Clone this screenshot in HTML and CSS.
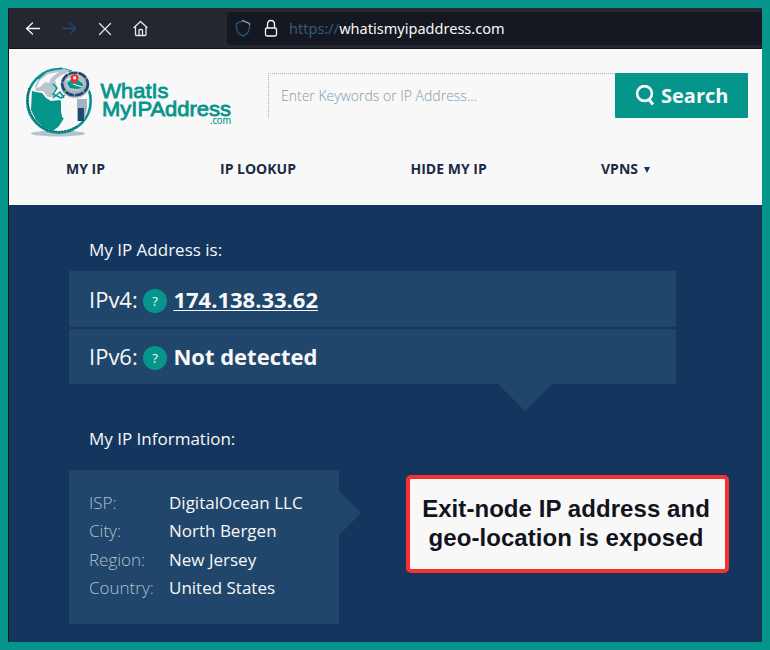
FILE: index.html
```html
<!DOCTYPE html>
<html lang="en">
<head>
<meta charset="utf-8">
<title>What Is My IP Address</title>
<link rel="stylesheet" href="styles.css">
</head>
<body>
<div class="window">
  <div class="toolbar">
    <svg class="nav-icons" width="140" height="40" viewBox="0 0 140 40" fill="none" stroke-linecap="round" stroke-linejoin="round">
      <path d="M17.500 20.500H30.500M23.500 15L17.500 20.500L23.500 26" stroke="#f8f8f8" stroke-width="1.300"/>
      <path d="M53.500 20.500H66.500M61 15L67 20.500L61 26" stroke="#204870" stroke-width="1.300"/>
      <path d="M90.500 15.500L101.500 26.500M101.500 15.500L90.500 26.500" stroke="#e4eaf0" stroke-width="1.200"/>
      <path d="M125 19.500L131.500 13.500L138 19.500M126.500 19V26.500Q126.500 27.500 127.500 27.500H136Q137 27.500 137 26.500V19M130 27.500V22.500Q130 21.500 131 21.500H132.500Q133.500 21.500 133.500 22.500V27.500" stroke="#e4eaf0" stroke-width="1.300"/>
    </svg>
    <div class="address">
      <svg width="52" height="32" viewBox="0 0 52 32" fill="none" stroke-width="1.500" stroke-linejoin="round">
        <path d="M16 8.700L22.500 11.500V15Q22.500 21 16 24Q9.500 21 9.500 15V11.500Z" stroke="#245078"/>
        <path d="M15 9L16 8.700L22.500 11.500V13" stroke="#a0b4c4" stroke-width="1"/>
        <rect x="38.500" y="16" width="11" height="8" rx="1.500" stroke="#f8f8f8" stroke-width="1.300"/>
        <path d="M40.500 16V12.500Q40.500 8.500 44 8.500T47.500 12.500V16" stroke="#f8f8f8" stroke-width="1.300"/>
      </svg>
      <span class="url"><span class="scheme">https://</span>whatismyipaddress.com</span>
    </div>
  </div>

  <header class="header">
    <div class="brand-row">
      <svg class="logo" width="214" height="78" viewBox="22 62 214 78">
        <ellipse cx="58" cy="133.500" rx="27" ry="3" fill="#a0b4c4" opacity=".8"/>
        <circle cx="59" cy="101" r="31.700" fill="#f8f8f8" stroke="#06958b" stroke-width="2.600"/>
        <path d="M29 88Q24 112 41 126Q58 137 77 126" fill="none" stroke="#204870" stroke-width="1.200" stroke-dasharray="2 1"/>
        <path d="M32 91L36 92L42 93L46 98L51 101L60 100L62 105L57 109L62 113L64 118L59 126L53 131L43 127L36 120L31 110Z" fill="#06958b"/>
        <path d="M44 101H61V116L63 119L58 127L52 130L44 127Z" fill="#06958b"/>
        <path d="M38 80L44 73L54 70L65 69L70 71L60 76L55 80L57 87L52 92L55 97L48 97L43 91L36 91L35 86Z" fill="#b8c6d1"/>
        <path d="M40 80L48 74L59 72L51 78L49 83L45 82L40 87L36 88Z" fill="#f8f8f8"/>
        <path d="M38 79L47 71L62 68M53 84L57 88L53 94L61 98L66 94L72 97M53 98L60 92L64 98" fill="none" stroke="#06958b" stroke-width="1.500"/>
        <path d="M61 101L75 101L76 118Q69 127 63 128L66 120L62 117L61 110Z" fill="#f8f8f8"/>
        <path d="M77 99H87V108L84 121H77Z" fill="#a0b4c4"/>
        <path d="M78 108H84V121H78Z" fill="#204870"/>
        <ellipse cx="75" cy="85" rx="15" ry="13.500" fill="#a0b4c4" stroke="#f8f8f8"/>
        <ellipse cx="75" cy="84" rx="12.800" ry="11.300" fill="none" stroke="#204870" stroke-width="2.600" stroke-dasharray="9 1"/>
        <ellipse cx="75" cy="82.500" rx="10" ry="8.800" fill="#b4c4cf"/>
        <path d="M67 83L72 79L78 80L83 84L82 88L77 89L70 88Z" fill="#06958b"/>
        <path d="M73 84L82 87M67 80L71 78" stroke="#f8f8f8" stroke-width="1.300"/>
        <path d="M74.500 84.500L70.500 79Q70 74.500 74.500 74Q79 74.500 78.500 79Z" fill="#f83030"/>
        <rect x="73.200" y="76.500" width="2.800" height="2.800" fill="#f8f8f8"/>
        <g fill="#06958b" font-family="Liberation Sans, Arial, sans-serif" stroke="#06958b">
          <text x="100.500" y="98" font-size="21" stroke-width=".8" textLength="68" lengthAdjust="spacingAndGlyphs">WhatIs</text>
          <text x="102" y="116" font-size="21" stroke-width=".8" textLength="129" lengthAdjust="spacingAndGlyphs">MyIPAddress</text>
          <text x="210" y="124" font-size="10" stroke-width=".2" font-family="Open Sans, sans-serif" textLength="21" lengthAdjust="spacingAndGlyphs">.com</text>
        </g>
      </svg>
      <div class="search">
        <div class="field">Enter Keywords or IP Address...</div>
        <div class="button">
          <svg width="20" height="22" viewBox="0 0 20 22" fill="none" stroke="#f8f8f8"><circle cx="9.500" cy="8.500" r="7.400" stroke-width="2.600"/><path d="M13.500 14L18 19.500" stroke-width="3"/></svg>
          <span class="button-label">Search</span>
        </div>
      </div>
    </div>
    <nav class="menu">
      <span class="item">MY IP</span>
      <span class="item">IP LOOKUP</span>
      <span class="item">HIDE MY IP</span>
      <span class="item">VPNS <svg class="caret" width="6" height="6" viewBox="0 0 6 6"><path d="M0 0H6L3 6Z" fill="#14365e"/></svg></span>
    </nav>
  </header>

  <main class="main">
    <h2 class="title">My IP Address is:</h2>
    <div class="addresses">
      <div class="row"><span class="kind">IPv4:</span><span class="help">?</span><span class="value linked">174.138.33.62</span></div>
      <div class="row"><span class="kind">IPv6:</span><span class="help">?</span><span class="value undetected">Not detected</span></div>
    </div>
    <h2 class="title info-title">My IP Information:</h2>
    <div class="lower">
      <dl class="info">
        <dt>ISP:</dt><dd class="isp">DigitalOcean LLC</dd>
        <dt>City:</dt><dd>North Bergen</dd>
        <dt>Region:</dt><dd>New Jersey</dd>
        <dt>Country:</dt><dd>United States</dd>
      </dl>
      <div class="note"><span class="line-one">Exit-node IP address and</span><br><span class="line-two">geo-location is exposed</span></div>
    </div>
  </main>
</div>
</body>
</html>
```
FILE: styles.css
```css
* { box-sizing: border-box; }
body {
  margin: 0;
  width: 770px;
  height: 650px;
  padding: 8px;
  background: #06958b;
  font-family: "Open Sans", sans-serif;
  overflow: hidden;
}
.window { width: 754px; height: 634px; border-left: 1px solid #12141d; }
.toolbar {
  height: 41px;
  display: flex;
  align-items: center;
  background: #24272f;
  border-bottom: 1px solid #12141d;
}
.address {
  flex: 1;
  height: 33px;
  margin-left: 78px;
  display: flex;
  align-items: center;
  background: #151820;
  border-radius: 4px 0 0 4px;
}
.url { margin-left: 10px; font: 14.550px/32px "Noto Sans", sans-serif; color: #f8f8f8; white-space: nowrap; }
.scheme { color: #34597b; }
.header { height: 156px; background: #f8f8f8; }
.brand-row { display: flex; height: 92px; }
.logo { margin: 13px 0 0 13px; flex: none; }
.search { display: flex; margin: 24px 0 0 32px; height: 45px; width: 480px; }
.field {
  width: 347px;
  padding-left: 12px;
  border-top: 1px dotted #a0b4c4;
  border-left: 1px dotted #a0b4c4;
  color: #7f99ad;
  font-size: 14px;
  font-weight: 300;
  line-height: 43px;
}
.button {
  width: 133px;
  display: flex;
  align-items: center;
  padding-left: 20px;
  gap: 6px;
  border-radius: 1px;
  background: #06958b;
  color: #f8f8f8;
  font-size: 20px;
  font-weight: 700;
  line-height: 45px;
}
.menu {
  display: grid;
  grid-template-columns: 154px 190.500px 190.500px 1fr;
  padding-left: 57px;
  color: #1b2b42;
  font-size: 14px;
  font-weight: 700;
  line-height: 56px;
}
.caret { margin: 0 0 1px 2px; }
.main { height: 437px; padding: 32px 0 0 60px; background: #14365e; color: #f8f8f8; }
.title { margin: 0 0 0 20px; height: 34px; font-size: 17px; font-weight: 400; line-height: 26px; }
.addresses { position: relative; width: 607px; display: grid; gap: 2px; }
.addresses::after {
  content: "";
  position: absolute;
  left: 429px;
  top: 100%;
  border: 27px solid transparent;
  border-top-color: #20466b;
  border-bottom: 0;
}
.row {
  height: 56px;
  display: flex;
  align-items: center;
  padding-left: 20px;
  background: #20466b;
  font-size: 22px;
}
.row + .row { height: 55px; padding-bottom: 1px; }
.kind { width: 54px; font-weight: 400; }
.help {
  width: 24px;
  height: 24px;
  margin-top: 3px;
  border-radius: 50%;
  background: #06958b;
  text-align: center;
  font-size: 13px;
  line-height: 24px;
}
.value { margin-left: 6.400px; font-weight: 700; }
.linked { text-decoration: underline; text-decoration-thickness: 1px; text-underline-offset: 2px; }
.info-title { margin-top: 42px; height: 44px; }
.lower { display: flex; align-items: flex-start; }
.info {
  position: relative;
  width: 270px;
  height: 154px;
  margin: 0;
  padding: 19px 0 0 20px;
  display: grid;
  grid-template-columns: 80px 1fr;
  grid-auto-rows: 28.400px;
  align-content: start;
  background: #20466b;
  font-size: 17px;
  line-height: 28px;
}
.info::after {
  content: "";
  position: absolute;
  left: 100%;
  top: 21px;
  border: 22px solid transparent;
  border-left-color: #20466b;
  border-right: 0;
}
.info dt { color: #b0c2cf; font-weight: 300; }
.info dd { margin: 0; }
.note {
  width: 323px;
  height: 98px;
  margin: 5px 0 0 67px;
  padding: 15px 3px 0 0;
  border: 4px solid #f83030;
  border-radius: 5px;
  background: #f8f8f8;
  color: #12141d;
  text-align: center;
  font: 700 24px/29px "Liberation Sans", Arial, sans-serif;
  letter-spacing: 0.060px;
  white-space: nowrap;
}
```
